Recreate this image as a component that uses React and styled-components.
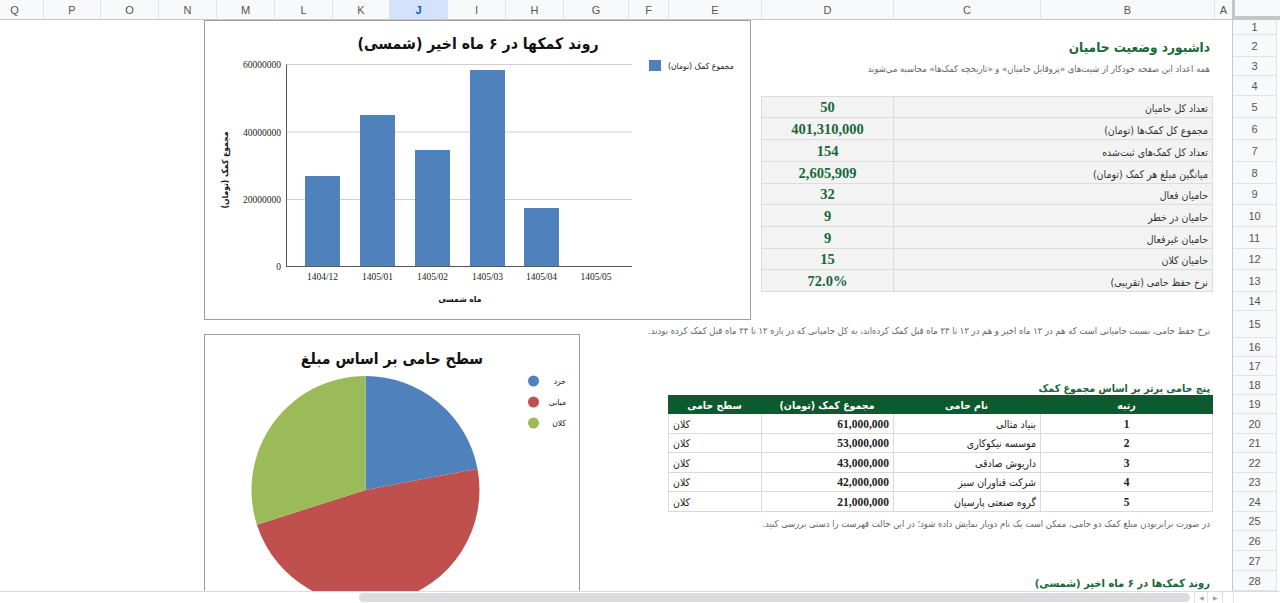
import React from 'react';
import styled, { createGlobalStyle, css } from 'styled-components';

const FA = `"DejaVu Sans Condensed", "DejaVu Sans", "Liberation Sans", sans-serif`;
const NUM = `"Liberation Serif", "DejaVu Serif", serif`;

const COLS = ['A','B','C','D','E','F','G','H','I','J','K','L','M','N','O','P','Q'];
const WIDTHS = [18,174,147,132,93,40,65,58,58,58,57,58,58,58,58,57,58];
const ROW_H = [15,22,19,20,22,22,22,22,21,22,22,21,22,19,27,19,19,19,19,20,19,20,19,20,19,20,20,20];

const colTemplate = WIDTHS.map((w) => `${w}px`).join(' ');
const rowTemplate = ROW_H.map((h) => `${h}px`).join(' ');

const GREEN = '#17683a';
const DARK_GREEN = '#0c5a2d';

const GlobalStyle = createGlobalStyle`
  html, body { margin: 0; padding: 0; background: #fff; }
  body { font-family: "Liberation Sans", Arial, sans-serif; }
  * { box-sizing: border-box; }
`;

const Window = styled.div`
  width: 1280px;
  height: 603px;
  overflow: hidden;
  display: flex;
  flex-direction: column;
  background: #fff;
`;

const HeaderRow = styled.div`
  direction: rtl;
  flex: none;
  height: 20px;
  display: grid;
  grid-template-columns: 48px ${colTemplate};
`;

const Corner = styled.div`
  background: #f8f9fa;
  border-left: 3px solid #c4c7c5;
  border-bottom: 4px solid #c4c7c5;
`;

const ColHeader = styled.div`
  display: flex;
  align-items: center;
  justify-content: center;
  font-size: 11px;
  border-left: 1px solid #e1e3e1;
  border-bottom: 1px solid #c4c7c5;
  background: ${(p) => (p.$active ? '#d3e3fd' : '#f8f9fa')};
  color: ${(p) => (p.$active ? '#0b57d0' : '#555')};
  font-weight: ${(p) => (p.$active ? 700 : 400)};
`;

const Body = styled.div`
  direction: rtl;
  flex: none;
  height: 571px;
  display: flex;
  overflow: hidden;
`;

const RowHeaderCol = styled.div`
  flex: none;
  width: 48px;
  padding-right: 3px;
  display: grid;
  grid-template-rows: ${rowTemplate};
  background: #fff;
`;

const RowHeader = styled.div`
  display: flex;
  align-items: center;
  justify-content: center;
  font-size: 11px;
  color: #555;
  background: #f8f9fa;
  border-left: 1px solid #c4c7c5;
  border-right: 1px solid #e1e3e1;
  border-bottom: 1px solid #e1e3e1;
`;

const SheetGrid = styled.div`
  position: relative;
  flex: 1;
  min-width: 0;
  display: grid;
  grid-template-columns: ${colTemplate};
  grid-template-rows: ${rowTemplate};
`;

const place = css`
  grid-column: ${(p) => p.$col};
  grid-row: ${(p) => p.$row};
`;

const TextCell = styled.div`
  ${place};
  display: flex;
  align-items: flex-end;
  justify-content: flex-start;
  white-space: nowrap;
  padding: 0 4px 2px;
  font-family: ${FA};
`;

const SheetTitle = styled(TextCell)`
  font-size: 13.5px;
  font-weight: 700;
  color: ${GREEN};
  padding-bottom: 2px;
`;

const SectionTitle = styled(TextCell)`
  font-size: ${(p) => p.$size || 11}px;
  font-weight: 700;
  color: ${GREEN};
  padding-bottom: 1px;
`;

const Caption = styled(TextCell)`
  font-size: 9.4px;
  color: #666;
  padding-bottom: 2px;
`;

const KpiLabel = styled.div`
  ${place};
  display: flex;
  align-items: flex-end;
  padding: 0 4px 3px;
  background: #f3f3f3;
  border-bottom: 1px solid #dcdcdc;
  border-left: 1px solid #dcdcdc;
  border-right: 1px solid #dcdcdc;
  border-top: ${(p) => (p.$first ? '1px solid #dcdcdc' : '0')};
  margin-right: 1px;
  font-family: ${FA};
  font-size: 10.5px;
  color: #333;
  white-space: nowrap;
`;

const KpiValue = styled.div`
  ${place};
  display: flex;
  align-items: center;
  justify-content: center;
  padding-top: 1px;
  background: #f3f3f3;
  border-bottom: 1px solid #dcdcdc;
  border-left: 1px solid #dcdcdc;
  border-top: ${(p) => (p.$first ? '1px solid #dcdcdc' : '0')};
  font-family: ${NUM};
  font-weight: 700;
  font-size: 14.5px;
  color: ${GREEN};
`;

const HeadCell = styled.div`
  ${place};
  display: flex;
  align-items: center;
  justify-content: center;
  background: ${DARK_GREEN};
  color: #fff;
  font-family: ${FA};
  font-weight: 700;
  font-size: 10.5px;
  white-space: nowrap;
  margin-right: ${(p) => (p.$edge ? '1px' : '0')};
`;

const DataCell = styled.div`
  ${place};
  display: flex;
  align-items: center;
  justify-content: ${(p) => p.$justify || 'flex-start'};
  padding: 0 4px;
  background: #fff;
  border-bottom: 1px solid #d9d9d9;
  border-left: 1px solid #d9d9d9;
  border-right: ${(p) => (p.$edge ? '1px solid #d9d9d9' : '0')};
  margin-right: ${(p) => (p.$edge ? '1px' : '0')};
  font-family: ${(p) => (p.$num ? NUM : FA)};
  font-weight: ${(p) => (p.$bold ? 700 : 400)};
  font-size: ${(p) => (p.$num ? '11.5px' : '10.5px')};
  color: #222;
  white-space: nowrap;
`;

const ChartFrame = styled.div`
  position: absolute;
  right: ${(p) => p.$right}px;
  top: ${(p) => p.$top}px;
  width: ${(p) => p.$w}px;
  height: ${(p) => p.$h}px;
  border: 1px solid #9e9e9e;
  background: #fff;
  direction: ltr;

  svg {
    display: block;
  }
`;

const ScrollRow = styled.div`
  flex: none;
  height: 12px;
  display: flex;
  border-top: 1px solid #dadce0;
  background: #fff;
`;

const ScrollTrack = styled.div`
  flex: none;
  width: 1194px;
  display: flex;
  align-items: center;
  padding: 0 4px 0 359px;
`;

const ScrollThumb = styled.div`
  flex: 1;
  height: 9px;
  border-radius: 5px;
  background: #dadce0;
`;

const ArrowBox = styled.div`
  flex: none;
  width: ${(p) => p.$w}px;
  display: flex;
  align-items: center;
  justify-content: center;
  border-left: 1px solid #e1e3e1;
  color: #9aa0a6;
  font-size: 6px;
`;

const ScrollRest = styled.div`
  flex: 1;
  border-left: 1px solid #e1e3e1;
`;

const kpis = [
  ['تعداد کل حامیان', '50'],
  ['مجموع کل کمک‌ها (تومان)', '401,310,000'],
  ['تعداد کل کمک‌های ثبت‌شده', '154'],
  ['میانگین مبلغ هر کمک (تومان)', '2,605,909'],
  ['حامیان فعال', '32'],
  ['حامیان در خطر', '9'],
  ['حامیان غیرفعال', '9'],
  ['حامیان کلان', '15'],
  ['نرخ حفظ حامی (تقریبی)', '72.0%'],
];

const topFive = [
  ['1', 'بنیاد مثالی', '61,000,000', 'کلان'],
  ['2', 'موسسه نیکوکاری', '53,000,000', 'کلان'],
  ['3', 'داریوش صادقی', '43,000,000', 'کلان'],
  ['4', 'شرکت فناوران سبز', '42,000,000', 'کلان'],
  ['5', 'گروه صنعتی پارسیان', '21,000,000', 'کلان'],
];

const BAR_BLUE = '#4f81bd';

function BarChart() {
  const bars = [
    { label: '1404/12', cx: 117.5, top: 155 },
    { label: '1405/01', cx: 172.5, top: 94 },
    { label: '1405/02', cx: 227.5, top: 129 },
    { label: '1405/03', cx: 282.5, top: 49 },
    { label: '1405/04', cx: 336.5, top: 187 },
    { label: '1405/05', cx: 391, top: null },
  ];
  const grid = [
    { y: 43.5, t: '60000000' },
    { y: 111, t: '40000000' },
    { y: 178.5, t: '20000000' },
    { y: 245.5, t: '0' },
  ];
  return (
    <ChartFrame $right={481} $top={0} $w={547} $h={300}>
      <svg width="545" height="298" viewBox="0 0 545 298">
        <text x="273" y="28" textAnchor="middle" fontFamily={FA} fontWeight="700" fontSize="15.7" fill="#111">
          روند کمکها در ۶ ماه اخیر (شمسی)
        </text>
        {grid.slice(0, 3).map((g) => (
          <line key={g.t} x1="82" x2="427" y1={g.y} y2={g.y} stroke="#cfcfcf" strokeWidth="1" />
        ))}
        {grid.map((g) => (
          <text key={'l' + g.t} x="76" y={g.y + 3.5} textAnchor="end" fontFamily={NUM} fontSize="9.5" fill="#222">
            {g.t}
          </text>
        ))}
        {bars.map((b) =>
          b.top !== null ? (
            <rect key={b.label} x={b.cx - 17.5} y={b.top} width="35" height={245.5 - b.top} fill={BAR_BLUE} />
          ) : null
        )}
        <line x1="81.5" x2="81.5" y1="43.5" y2="246" stroke="#555" strokeWidth="1" />
        <line x1="81.5" x2="427" y1="245.5" y2="245.5" stroke="#555" strokeWidth="1" />
        {bars.map((b) => (
          <text key={'x' + b.label} x={b.cx} y="259" textAnchor="middle" fontFamily={NUM} fontSize="9.5" fill="#222">
            {b.label}
          </text>
        ))}
        <text x="255" y="281" textAnchor="middle" fontFamily={FA} fontWeight="700" fontSize="8.5" fill="#111">
          ماه شمسی
        </text>
        <text
          x="20"
          y="149"
          textAnchor="middle"
          fontFamily={FA}
          fontWeight="700"
          fontSize="8.5"
          fill="#111"
          transform="rotate(-90 20 149) translate(0 3)"
        >
          مجموع کمک (تومان)
        </text>
        <rect x="444" y="39" width="12" height="11" fill={BAR_BLUE} />
        <text x="463" y="47.5" textAnchor="start" fontFamily={FA} fontSize="8.5" fill="#222">
          مجموع کمک (تومان)
        </text>
      </svg>
    </ChartFrame>
  );
}

function slicePath(cx, cy, r, a0, a1) {
  const rad = (a) => (a * Math.PI) / 180;
  const x0 = cx + r * Math.sin(rad(a0));
  const y0 = cy - r * Math.cos(rad(a0));
  const x1 = cx + r * Math.sin(rad(a1));
  const y1 = cy - r * Math.cos(rad(a1));
  const large = a1 - a0 > 180 ? 1 : 0;
  return `M ${cx} ${cy} L ${x0.toFixed(2)} ${y0.toFixed(2)} A ${r} ${r} 0 ${large} 1 ${x1.toFixed(2)} ${y1.toFixed(2)} Z`;
}

function PieChart() {
  const cx = 160.5;
  const cy = 155;
  const r = 114;
  const slices = [
    { name: 'خرد', color: '#4f81bd', a0: 0, a1: 79.2 },
    { name: 'میانی', color: '#c0504d', a0: 79.2, a1: 252.3 },
    { name: 'کلان', color: '#9bbb59', a0: 252.3, a1: 360 },
  ];
  return (
    <ChartFrame $right={652} $top={314} $w={376} $h={290}>
      <svg width="374" height="288" viewBox="0 0 374 288">
        <text x="187" y="29" textAnchor="middle" fontFamily={FA} fontWeight="700" fontSize="15.6" fill="#111">
          سطح حامی بر اساس مبلغ
        </text>
        {slices.map((s) => (
          <path key={s.name} d={slicePath(cx, cy, r, s.a0, s.a1)} fill={s.color} />
        ))}
        {slices.map((s, i) => (
          <g key={'lg' + s.name}>
            <circle cx="328.5" cy={46 + i * 21} r="5.5" fill={s.color} />
            <text x="361" y={49 + i * 21} textAnchor="end" fontFamily={FA} fontSize="8.5" fill="#222">
              {s.name}
            </text>
          </g>
        ))}
      </svg>
    </ChartFrame>
  );
}

export default function App() {
  return (
    <>
      <GlobalStyle />
      <Window>
        <HeaderRow>
          <Corner />
          {COLS.map((c) => (
            <ColHeader key={c} $active={c === 'J'}>
              {c}
            </ColHeader>
          ))}
        </HeaderRow>
        <Body>
          <RowHeaderCol>
            {ROW_H.map((_, i) => (
              <RowHeader key={i}>{i + 1}</RowHeader>
            ))}
          </RowHeaderCol>
          <SheetGrid>
            <SheetTitle $col="2 / 6" $row="2">داشبورد وضعیت حامیان</SheetTitle>
            <Caption $col="2 / 6" $row="3">
              همه اعداد این صفحه خودکار از شیت‌های «پروفایل حامیان» و «تاریخچه کمک‌ها» محاسبه می‌شوند
            </Caption>

            {kpis.map(([label, value], i) => (
              <React.Fragment key={label}>
                <KpiLabel $col="2 / 4" $row={5 + i} $first={i === 0}>
                  {label}
                </KpiLabel>
                <KpiValue $col="4" $row={5 + i} $first={i === 0}>
                  {value}
                </KpiValue>
              </React.Fragment>
            ))}

            <Caption $col="2 / 8" $row="15">
              نرخ حفظ حامی، نسبت حامیانی است که هم در ۱۲ ماه اخیر و هم در ۱۲ تا ۲۴ ماه قبل کمک کرده‌اند، به کل حامیانی که در بازه ۱۲ تا ۲۴ ماه قبل کمک کرده بودند.
            </Caption>

            <SectionTitle $col="2 / 6" $row="18" $size={10.6}>
              پنج حامی برتر بر اساس مجموع کمک
            </SectionTitle>

            <HeadCell $col="2" $row="19" $edge>رتبه</HeadCell>
            <HeadCell $col="3" $row="19">نام حامی</HeadCell>
            <HeadCell $col="4" $row="19">مجموع کمک (تومان)</HeadCell>
            <HeadCell $col="5" $row="19">سطح حامی</HeadCell>

            {topFive.map(([rank, name, amount, level], i) => (
              <React.Fragment key={rank}>
                <DataCell $col="2" $row={20 + i} $edge $justify="center" $num $bold>
                  {rank}
                </DataCell>
                <DataCell $col="3" $row={20 + i}>{name}</DataCell>
                <DataCell $col="4" $row={20 + i} $num $bold>
                  {amount}
                </DataCell>
                <DataCell $col="5" $row={20 + i} $justify="flex-end">
                  {level}
                </DataCell>
              </React.Fragment>
            ))}

            <Caption $col="2 / 6" $row="25">
              در صورت برابربودن مبلغ کمک دو حامی، ممکن است یک نام دوبار نمایش داده شود؛ در این حالت فهرست را دستی بررسی کنید.
            </Caption>

            <SectionTitle $col="2 / 6" $row="28" $size={11.1}>
              روند کمک‌ها در ۶ ماه اخیر (شمسی)
            </SectionTitle>

            <BarChart />
            <PieChart />
          </SheetGrid>
        </Body>
        <ScrollRow>
          <ScrollTrack>
            <ScrollThumb />
          </ScrollTrack>
          <ArrowBox $w={13}>◀</ArrowBox>
          <ArrowBox $w={15}>▶</ArrowBox>
          <ArrowBox $w={11} />
          <ScrollRest />
        </ScrollRow>
      </Window>
    </>
  );
}
